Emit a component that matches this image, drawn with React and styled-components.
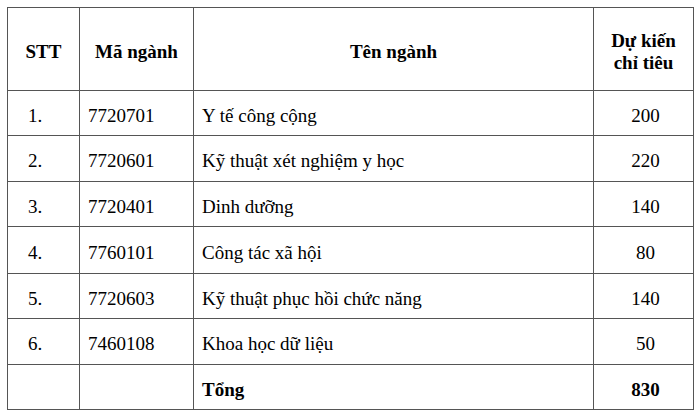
import React from "react";
import styled, { createGlobalStyle } from "styled-components";

const GlobalStyle = createGlobalStyle`
  html, body {
    margin: 0;
    padding: 0;
    background: #fff;
  }
  body {
    font-family: "Liberation Serif", "Times New Roman", serif;
    color: #000;
  }
`;

const rows = [
  { stt: "1.", code: "7720701", name: "Y tế công cộng", quota: "200", h: 45 },
  { stt: "2.", code: "7720601", name: "Kỹ thuật xét nghiệm y học", quota: "220", h: 46 },
  { stt: "3.", code: "7720401", name: "Dinh dưỡng", quota: "140", h: 45 },
  { stt: "4.", code: "7760101", name: "Công tác xã hội", quota: "80", h: 47 },
  { stt: "5.", code: "7720603", name: "Kỹ thuật phục hồi chức năng", quota: "140", h: 45 },
  { stt: "6.", code: "7460108", name: "Khoa học dữ liệu", quota: "50", h: 46 },
];

export default function App() {
  return (
    <Page>
      <GlobalStyle />
      <Table>
        <colgroup>
          <col style={{ width: 72 }} />
          <col style={{ width: 114 }} />
          <col style={{ width: 400 }} />
          <col style={{ width: 100 }} />
        </colgroup>
        <thead>
          <tr>
            <HeadCell $h={83}>STT</HeadCell>
            <HeadCell $h={83}>Mã ngành</HeadCell>
            <HeadCell $h={83}>Tên ngành</HeadCell>
            <HeadCell $h={83}>
              Dự kiến
              <br />
              chỉ tiêu
            </HeadCell>
          </tr>
        </thead>
        <tbody>
          {rows.map((r) => (
            <tr key={r.code}>
              <Cell $h={r.h} $pad="20px">{r.stt}</Cell>
              <Cell $h={r.h}>{r.code}</Cell>
              <Cell $h={r.h}>{r.name}</Cell>
              <Cell $h={r.h} $center>{r.quota}</Cell>
            </tr>
          ))}
          <tr>
            <Cell $h={45} />
            <Cell $h={45} />
            <Cell $h={45} $bold>Tổng</Cell>
            <Cell $h={45} $center $bold>830</Cell>
          </tr>
        </tbody>
      </Table>
    </Page>
  );
}

const Page = styled.div`
  padding: 7px;
`;

const Table = styled.table`
  width: 686px;
  table-layout: fixed;
  border-collapse: collapse;
  font-family: "Liberation Serif", "Times New Roman", serif;
  font-size: 19px;
  color: #000;
`;

const HeadCell = styled.th`
  height: ${(p) => p.$h}px;
  box-sizing: border-box;
  border: 1px solid #555;
  padding: 5px 4px 0;
  font-family: "Liberation Serif", "Times New Roman", serif;
  font-weight: bold;
  text-align: center;
  vertical-align: middle;
  line-height: 22px;
`;

const Cell = styled.td`
  height: ${(p) => p.$h}px;
  box-sizing: border-box;
  border: 1px solid #555;
  padding: 5px 4px 0 ${(p) => p.$pad || "8px"};
  font-family: "Liberation Serif", "Times New Roman", serif;
  text-align: ${(p) => (p.$center ? "center" : "left")};
  font-weight: ${(p) => (p.$bold ? "bold" : "normal")};
  vertical-align: middle;
  line-height: 22px;
  white-space: nowrap;
`;
